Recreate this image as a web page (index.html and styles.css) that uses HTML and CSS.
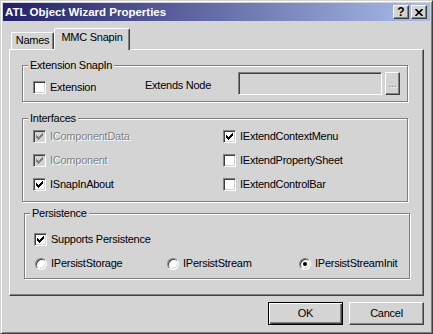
FILE: index.html
```html
<!DOCTYPE html>
<html lang="en">
<head>
    <meta charset="UTF-8">
    <title>ATL Object Wizard Properties</title>
    <link rel="stylesheet" href="styles.css">
</head>
<body>
    <div class="window">
        <!-- Caption bar -->
        <div class="titlebar">
            <span class="title">ATL Object Wizard Properties</span>
            <div class="caption-buttons">
                <button class="caption-btn help">?</button>
                <button class="caption-btn">
                    <svg width="8" height="7" viewBox="0 0 8 7"><path d="M0.5 0 L7.5 7 M7.5 0 L0.5 7" stroke="#000" stroke-width="1.6"/></svg>
                </button>
            </div>
        </div>

        <!-- Tabs -->
        <div class="tabs">
            <div class="tab tab-names">Names</div>
            <div class="tab active">MMC Snapin</div>
        </div>

        <div class="panel">
            <!-- Extension SnapIn -->
            <fieldset class="group group-ext">
                <legend>Extension SnapIn</legend>
                <div class="ext-row">
                    <label class="check ext-check"><span class="box"></span>Extension</label>
                    <span class="ext-label">Extends Node</span>
                    <span class="field"></span>
                    <span class="browse">...</span>
                </div>
            </fieldset>

            <!-- Interfaces -->
            <fieldset class="group group-if">
                <legend>Interfaces</legend>
                <div class="if-grid">
                    <label class="check">
                        <span class="box disabled"><svg class="tick" width="7" height="7" viewBox="0 0 7 7"><path d="M0 2h1v3H0zM1 3h1v3H1zM2 4h1v3H2zM3 3h1v3H3zM4 2h1v3H4zM5 1h1v3H5zM6 0h1v3H6z"/></svg></span>
                        <span class="dim">IComponentData</span>
                    </label>
                    <label class="check">
                        <span class="box"><svg class="tick" width="7" height="7" viewBox="0 0 7 7"><path d="M0 2h1v3H0zM1 3h1v3H1zM2 4h1v3H2zM3 3h1v3H3zM4 2h1v3H4zM5 1h1v3H5zM6 0h1v3H6z"/></svg></span>
                        IExtendContextMenu
                    </label>
                    <label class="check">
                        <span class="box disabled"><svg class="tick" width="7" height="7" viewBox="0 0 7 7"><path d="M0 2h1v3H0zM1 3h1v3H1zM2 4h1v3H2zM3 3h1v3H3zM4 2h1v3H4zM5 1h1v3H5zM6 0h1v3H6z"/></svg></span>
                        <span class="dim">IComponent</span>
                    </label>
                    <label class="check"><span class="box"></span>IExtendPropertySheet</label>
                    <label class="check">
                        <span class="box"><svg class="tick" width="7" height="7" viewBox="0 0 7 7"><path d="M0 2h1v3H0zM1 3h1v3H1zM2 4h1v3H2zM3 3h1v3H3zM4 2h1v3H4zM5 1h1v3H5zM6 0h1v3H6z"/></svg></span>
                        ISnapInAbout
                    </label>
                    <label class="check"><span class="box"></span>IExtendControlBar</label>
                </div>
            </fieldset>

            <!-- Persistence -->
            <fieldset class="group group-persist">
                <legend>Persistence</legend>
                <div class="persist-body">
                    <label class="check">
                        <span class="box"><svg class="tick" width="7" height="7" viewBox="0 0 7 7"><path d="M0 2h1v3H0zM1 3h1v3H1zM2 4h1v3H2zM3 3h1v3H3zM4 2h1v3H4zM5 1h1v3H5zM6 0h1v3H6z"/></svg></span>
                        Supports Persistence
                    </label>
                    <div class="radio-row">
                        <label class="radio-item"><span class="radio"></span>IPersistStorage</label>
                        <label class="radio-item"><span class="radio"></span>IPersistStream</label>
                        <label class="radio-item"><span class="radio on"></span>IPersistStreamInit</label>
                    </div>
                </div>
            </fieldset>
        </div>

        <!-- Dialog buttons -->
        <div class="buttons">
            <button class="btn default">OK</button>
            <button class="btn">Cancel</button>
        </div>
    </div>
</body>
</html>
```

FILE: styles.css
```css
/* Page */
html, body {
    margin: 0;
    padding: 0;
    background-color: #d4d4d4;
}

body {
    font-family: "Liberation Sans", Arial, sans-serif;
    font-size: 11px;
    letter-spacing: -0.25px;
    line-height: 13px;
    color: #000;
}

/* Window frame */
.window {
    width: 433px;
    height: 334px;
    box-sizing: border-box;
    padding: 2px;
    border: 1px solid;
    border-color: #d4d4d4 #404040 #404040 #d4d4d4;
    box-shadow: inset 1px 1px #fff, inset -1px -1px #808080;
    background-color: #d4d4d4;
}

/* Caption bar */
.titlebar {
    height: 18px;
    display: flex;
    align-items: center;
    justify-content: space-between;
    padding: 0 3px 0 2px;
    background: linear-gradient(to right, #221f68, #a9bde9);
}

.title {
    color: #fff;
    font-weight: bold;
    font-size: 11.5px;
    letter-spacing: 0;
}

.caption-buttons {
    display: flex;
    gap: 2px;
}

.caption-btn {
    width: 16px;
    height: 14px;
    box-sizing: border-box;
    padding: 0;
    display: flex;
    align-items: center;
    justify-content: center;
    border: 1px solid;
    border-color: #fff #404040 #404040 #fff;
    box-shadow: inset -1px -1px #808080;
    background-color: #d4d4d4;
    font-family: "Liberation Sans", Arial, sans-serif;
}

.caption-btn.help {
    font-weight: bold;
    font-size: 12px;
    line-height: 12px;
}

/* Tabs */
.tabs {
    display: flex;
    height: 21px;
    margin: 7px 6px 0;
    padding-left: 2px;
}

.tab {
    box-sizing: border-box;
    height: 17px;
    margin-top: 4px;
    padding-top: 1px;
    border: 1px solid;
    border-bottom: none;
    border-color: #fff #404040 #404040 #fff;
    border-radius: 2px 2px 0 0;
    box-shadow: inset -1px 0 #808080;
    background-color: #d4d4d4;
    text-align: center;
}

.tab-names {
    width: 43px;
}

.tab.active {
    width: 76px;
    height: 22px;
    margin-top: 0;
    padding-top: 2px;
    position: relative;
    z-index: 1;
}

/* Tab page */
.panel {
    height: 247px;
    box-sizing: border-box;
    margin: 0 6px;
    border: 1px solid;
    border-color: #fff #404040 #404040 #fff;
    box-shadow: inset -1px -1px #808080;
}

/* Group boxes */
.group {
    width: 386px;
    box-sizing: border-box;
    min-width: 0;
    padding: 0;
    border: 1px solid #808080;
    box-shadow: inset 1px 1px #fff, 1px 1px #fff;
}

.group legend {
    margin-left: 5px;
    padding: 0 2px;
    background-color: #d4d4d4;
}

.group-ext {
    margin: 9px 0 0 12px;
}

.group-if {
    margin: 10px 0 0 12px;
}

.group-persist {
    margin: 5px 0 0 14px;
}

/* Extension row */
.ext-row {
    display: flex;
    align-items: flex-start;
    height: 23px;
    padding: 0 0 6px 10px;
}

.ext-check {
    width: 112px;
    margin-top: 9px;
}

.ext-label {
    width: 93px;
    margin-top: 7px;
}

.field {
    width: 144px;
    height: 23px;
    box-sizing: border-box;
    border: 1px solid;
    border-color: #808080 #fff #fff #808080;
    box-shadow: inset 1px 1px #404040, inset -1px -1px #d4d4d4;
    background-color: #d4d4d4;
}

.browse {
    width: 15px;
    height: 23px;
    box-sizing: border-box;
    margin-left: 3px;
    display: flex;
    align-items: center;
    justify-content: center;
    border: 1px solid;
    border-color: #fff #404040 #404040 #fff;
    box-shadow: inset -1px -1px #808080;
    color: #808080;
    text-shadow: 1px 1px #fff;
}

/* Interfaces grid */
.if-grid {
    display: grid;
    grid-template-columns: 190px 1fr;
    row-gap: 11px;
    padding: 5px 0 10px 10px;
}

/* Persistence */
.persist-body {
    display: flex;
    flex-direction: column;
    gap: 11px;
    padding: 13px 0 8px 9px;
}

.radio-row {
    display: grid;
    grid-template-columns: 132px 132px 1fr;
}

/* Check boxes and radio buttons */
.check,
.radio-item {
    display: flex;
    align-items: center;
    gap: 4px;
    height: 13px;
    white-space: nowrap;
}

.box {
    width: 13px;
    height: 13px;
    flex: none;
    box-sizing: border-box;
    display: flex;
    align-items: center;
    justify-content: center;
    border: 1px solid;
    border-color: #808080 #fff #fff #808080;
    box-shadow: inset 1px 1px #404040, inset -1px -1px #d4d4d4;
    background-color: #fff;
}

.tick {
    fill: #000;
}

.box.disabled {
    background-color: #d4d4d4;
}

.box.disabled .tick {
    fill: #808080;
}

.dim {
    color: #808080;
    text-shadow: 1px 1px #fff;
}

.radio {
    width: 12px;
    height: 12px;
    flex: none;
    box-sizing: border-box;
    margin-left: 1px;
    display: flex;
    align-items: center;
    justify-content: center;
    border: 1px solid;
    border-color: #808080 #fff #fff #808080;
    border-radius: 50%;
    box-shadow: inset 1px 1px #404040, inset -1px -1px #d4d4d4;
    background-color: #fff;
}

.radio.on::after {
    content: "";
    width: 4px;
    height: 4px;
    border-radius: 50%;
    background-color: #000;
}

/* Dialog buttons */
.buttons {
    display: flex;
    justify-content: flex-end;
    gap: 6px;
    margin-top: 6px;
    padding-right: 6px;
}

.btn {
    width: 75px;
    height: 23px;
    box-sizing: border-box;
    padding: 0;
    border: 1px solid;
    border-color: #fff #404040 #404040 #fff;
    box-shadow: inset -1px -1px #808080;
    background-color: #d4d4d4;
    color: #000;
    font: inherit;
    letter-spacing: inherit;
}

.btn.default {
    border-color: #000;
    box-shadow: inset 1px 1px #fff, inset -1px -1px #404040, inset -2px -2px #808080;
}
```
